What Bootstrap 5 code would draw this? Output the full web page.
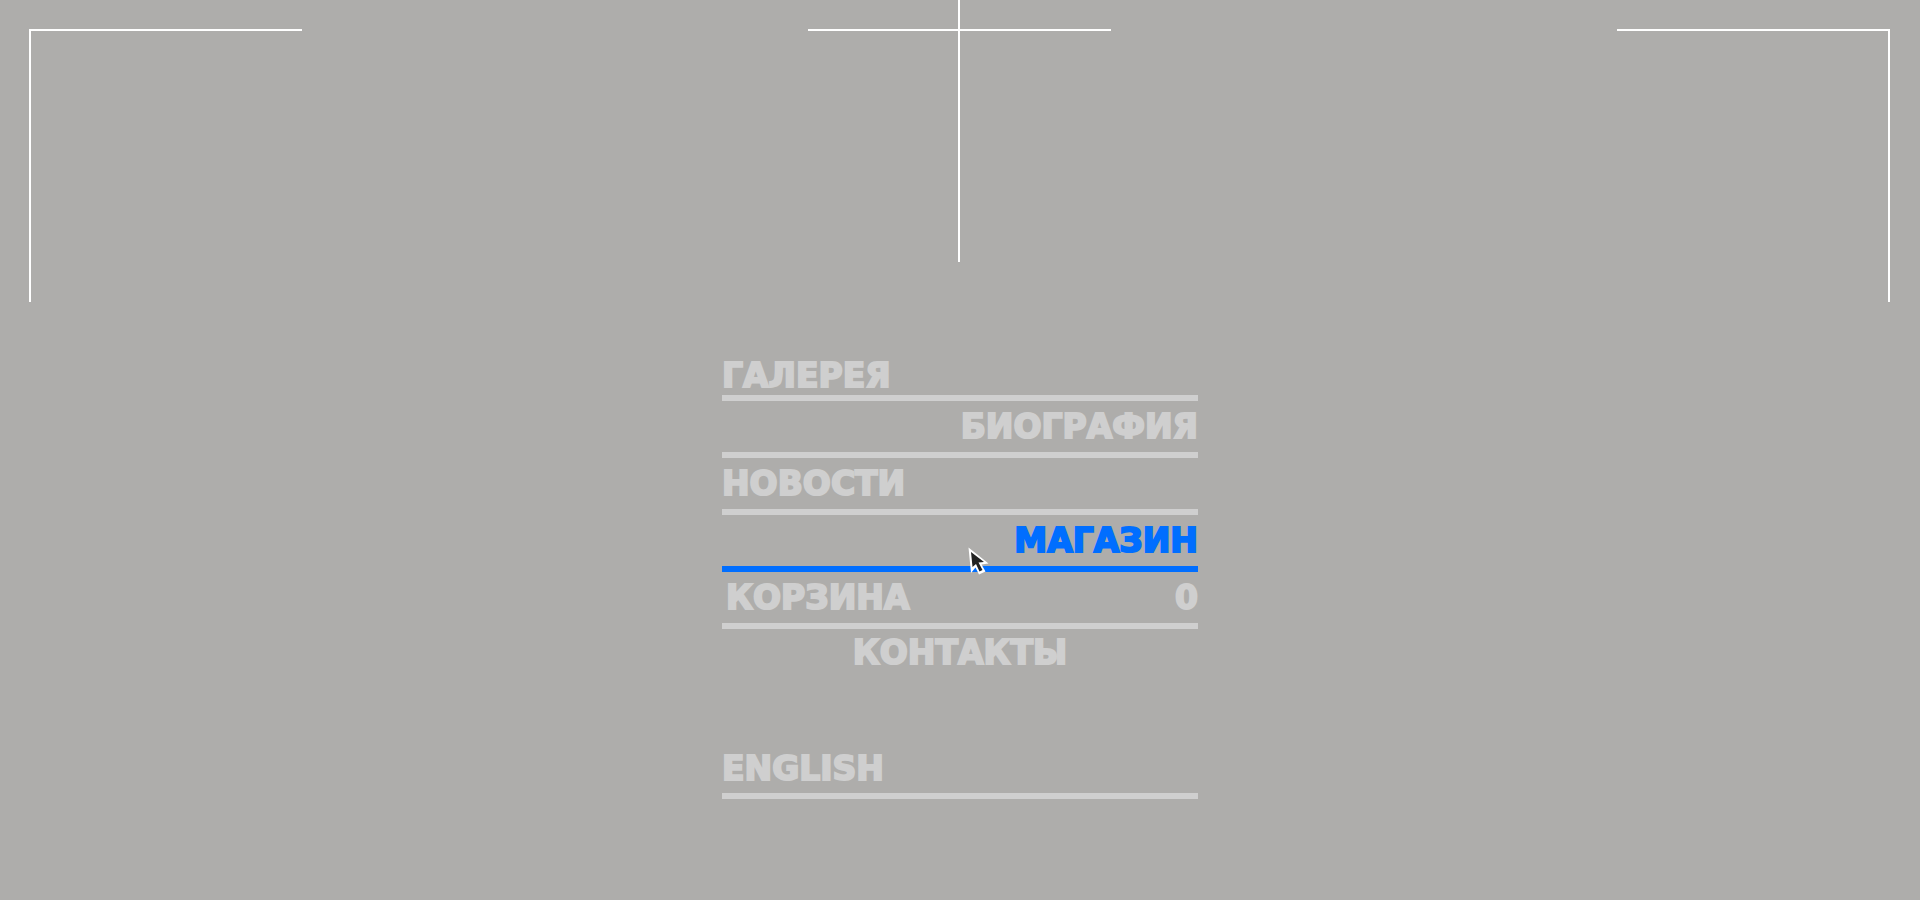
<!DOCTYPE html>
<html lang="ru">
<head>
<meta charset="utf-8">
<meta name="viewport" content="width=device-width, initial-scale=1">
<title>Меню</title>
<link href="https://cdn.jsdelivr.net/npm/bootstrap@5.3.0/dist/css/bootstrap.min.css" rel="stylesheet">
<style>
  body { background: #aeadab; font-family: "DejaVu Sans", "Liberation Sans", sans-serif; }
  .frame-top { padding: 29px 30px 0 29px; }
  .corner { width: 273px; height: 273px; border-top: 2px solid #fff; }
  .corner-start { border-left: 2px solid #fff; }
  .corner-end { border-right: 2px solid #fff; }
  .crosshair { width: 303px; height: 2px; background: #fff; }
  .crosshair-stem { top: -29px; left: 150px; width: 2px; height: 262px; background: #fff; }
  .menu { max-width: 476px; padding-top: 55px; }
  .menu-link {
    height: 57px; border-bottom: 6px solid currentColor; color: #cfcfcf;
    font-size: 33px; line-height: 32px; font-weight: 700; text-decoration: none;
    -webkit-text-stroke: 2px currentColor;
  }
  .menu-link:hover, .menu-link.active { color: #006eff; }
  .menu-first { height: 44px; }
  .menu-last { height: 48px; border-bottom: 0; }
  .lang { margin-top: 68px; }
  .lang .menu-link { height: 54px; }
  .pointer { left: 245px; top: 32px; pointer-events: none; }
</style>
</head>
<body>
<header class="frame-top d-flex justify-content-between align-items-start">
  <div class="corner corner-start"></div>
  <div class="crosshair position-relative"><div class="crosshair-stem position-absolute"></div></div>
  <div class="corner corner-end"></div>
</header>
<main class="menu w-100 mx-auto">
  <nav aria-label="Меню">
    <ul class="list-unstyled m-0">
      <li><a href="#" class="menu-link menu-first d-flex align-items-center">ГАЛЕРЕЯ</a></li>
      <li><a href="#" class="menu-link d-flex align-items-center justify-content-end">БИОГРАФИЯ</a></li>
      <li><a href="#" class="menu-link d-flex align-items-center">НОВОСТИ</a></li>
      <li class="position-relative">
        <a href="#" class="menu-link active d-flex align-items-center justify-content-end">МАГАЗИН</a>
        <svg class="pointer position-absolute" width="24" height="30" viewBox="0 0 24 30" aria-hidden="true">
          <path d="M1.500 0.500 L21.500 16.500 L14.500 17.500 L18.500 24.500 L12 27.500 L8.500 20.500 L4 26 Z" fill="#fff"/>
          <path d="M4 5 L17 15 L11.500 15.500 L15.500 23 L12.500 24.500 L9 17 L5.500 20 Z" fill="#222"/>
        </svg>
      </li>
      <li><a href="#" class="menu-link d-flex align-items-center justify-content-between"><span class="ps-1">КОРЗИНА</span><span>0</span></a></li>
      <li><a href="#" class="menu-link menu-last d-flex align-items-center justify-content-center">КОНТАКТЫ</a></li>
    </ul>
  </nav>
  <div class="lang"><a href="#" lang="en" class="menu-link d-flex align-items-center">ENGLISH</a></div>
</main>
<script src="https://cdn.jsdelivr.net/npm/bootstrap@5.3.0/dist/js/bootstrap.bundle.min.js"></script>
</body>
</html>
